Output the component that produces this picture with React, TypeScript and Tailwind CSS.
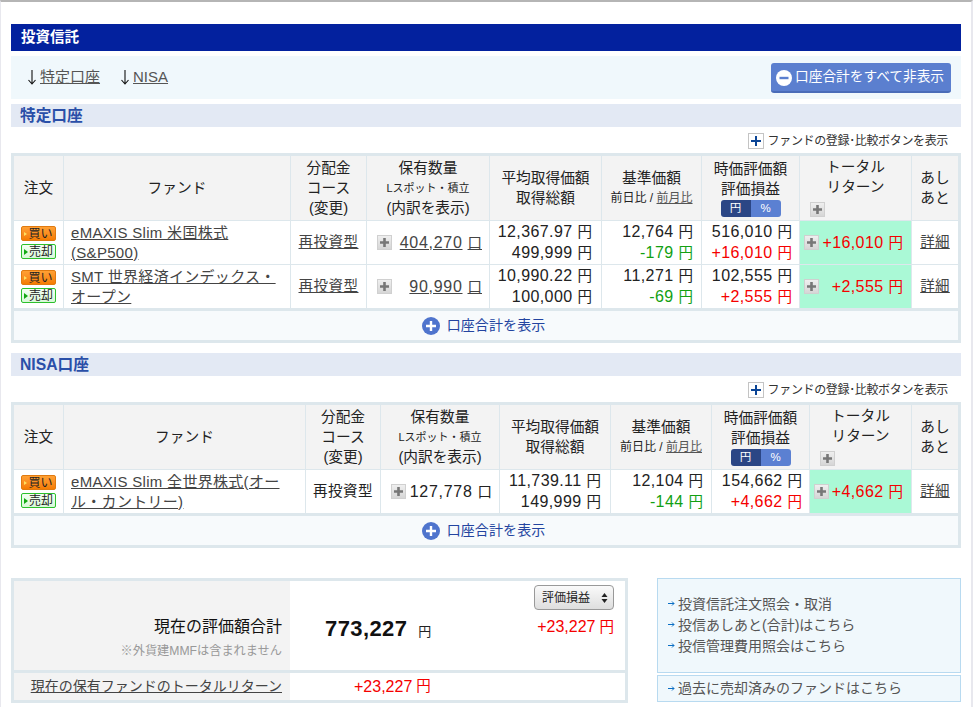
const fontStack = "font-['Liberation_Sans','Noto_Sans_CJK_JP',sans-serif]"

const firstCols = 'grid-cols-[49px_226px_75px_122px_111px_99px_97px_111px_46px]'
const nisaCols = 'grid-cols-[49px_241px_74px_118px_110px_100px_97px_101px_46px]'

type Fund = {
  name: string[]
  course: string
  courseLink: boolean
  qty: string
  qtyTight?: boolean
  avg: string
  cost: string
  base: string
  diff: string
  value: string
  gain: string
  total: string
}

const tokutei: Fund[] = [
  {
    name: ['eMAXIS Slim 米国株式', '(S&P500)'],
    course: '再投資型',
    courseLink: true,
    qty: '404,270',
    avg: '12,367.97',
    cost: '499,999',
    base: '12,764',
    diff: '-179',
    value: '516,010',
    gain: '+16,010',
    total: '+16,010',
  },
  {
    name: ['SMT 世界経済インデックス・', 'オープン'],
    course: '再投資型',
    courseLink: true,
    qty: '90,990',
    avg: '10,990.22',
    cost: '100,000',
    base: '11,271',
    diff: '-69',
    value: '102,555',
    gain: '+2,555',
    total: '+2,555',
  },
]

const nisa: Fund[] = [
  {
    name: ['eMAXIS Slim 全世界株式(オー', 'ル・カントリー)'],
    course: '再投資型',
    courseLink: false,
    qty: '127,778',
    qtyTight: true,
    avg: '11,739.11',
    cost: '149,999',
    base: '12,104',
    diff: '-144',
    value: '154,662',
    gain: '+4,662',
    total: '+4,662',
  },
]

function Yen({ v, className = '' }: { v: string; className?: string }) {
  return (
    <div className={`whitespace-nowrap text-right ${className}`}>
      <span className="text-[16px] tracking-[0.4px]">{v}</span>
      <span className="ml-[5px] text-[14.5px]">円</span>
    </div>
  )
}

function GrayPlus({ className = '' }: { className?: string }) {
  return (
    <span className={`flex h-[15px] w-[15px] shrink-0 items-center justify-center border border-[#d0d0d0] bg-gradient-to-b from-[#efefef] to-[#d6d6d6] ${className}`}>
      <svg width="9" height="9" viewBox="0 0 9 9">
        <path d="M3.2 0h2.6v3.2H9v2.6H5.8V9H3.2V5.8H0V3.2h3.2z" fill="#777" />
      </svg>
    </span>
  )
}

function CirclePlus() {
  return (
    <svg width="18" height="18" viewBox="0 0 18 18" className="shrink-0">
      <circle cx="9" cy="9" r="9" fill="#4f74cd" />
      <path d="M4 9h10M9 4v10" stroke="#fff" strokeWidth="2.4" />
    </svg>
  )
}

function OrderButtons() {
  return (
    <div className="flex flex-col items-center gap-[3px]">
      <span className="flex h-[15px] w-[35px] items-center justify-center gap-[1px] rounded-[2px] border border-[#e07a10] bg-gradient-to-b from-[#ffa033] to-[#f57c00] text-[12px] leading-none text-[#222]">
        <span className="border-y-[2px] border-l-[3px] border-y-transparent border-l-[#ffe060]" />
        買い
      </span>
      <span className="flex h-[15px] w-[35px] items-center justify-center gap-[1px] rounded-[2px] border border-[#2cc02c] bg-gradient-to-b from-[#f4fff4] to-[#d8f8d8] text-[12px] leading-none text-[#222]">
        <span className="border-y-[3px] border-l-[4px] border-y-transparent border-l-[#14a814]" />
        売却
      </span>
    </div>
  )
}

function RegisterRow() {
  return (
    <div className="flex h-[26px] items-center justify-end gap-[4px] pr-[13px] pt-[1px] text-[12px] tracking-[-0.35px] text-[#333]">
      <span className="flex h-[16px] w-[16px] items-center justify-center border border-[#c4c4c4] bg-white">
        <svg width="10" height="10" viewBox="0 0 10 10">
          <path d="M5 0v10M0 5h10" stroke="#0b4596" strokeWidth="2" />
        </svg>
      </span>
      ファンドの登録･比較ボタンを表示
    </div>
  )
}

function HeaderCells() {
  const th = 'flex flex-col items-center justify-center bg-[#f3f3f3] text-[14.7px] leading-[20px] text-[#222]'
  return (
    <>
      <div className={th}>注文</div>
      <div className={th}>ファンド</div>
      <div className={th}>
        <div>分配金</div>
        <div>コース</div>
        <div>(変更)</div>
      </div>
      <div className={th}>
        <div>保有数量</div>
        <div className="text-[11px]">Lスポット・積立</div>
        <div>(内訳を表示)</div>
      </div>
      <div className={th}>
        <div>平均取得価額</div>
        <div>取得総額</div>
      </div>
      <div className={th}>
        <div>基準価額</div>
        <div className="text-[12px]">
          前日比 / <span className="text-[#555] underline">前月比</span>
        </div>
      </div>
      <div className={th}>
        <div>時価評価額</div>
        <div>評価損益</div>
        <div className="mt-[1px] flex h-[17px] w-[60px] overflow-hidden rounded-[3px] text-[11.5px] leading-[17px] text-white">
          <span className="w-[30px] bg-[#2b4685] text-center">円</span>
          <span className="w-[30px] bg-[#5b80d2] text-center">%</span>
        </div>
      </div>
      <div className={`${th} !items-stretch !justify-start pt-[1px]`}>
        <div className="text-center">トータル</div>
        <div className="text-center">リターン</div>
        <GrayPlus className="ml-[10px] mt-[5px]" />
      </div>
      <div className={th}>
        <div>あし</div>
        <div>あと</div>
      </div>
    </>
  )
}

function FundRow({ f }: { f: Fund }) {
  const td = 'flex flex-col justify-center bg-white text-[#222]'
  return (
    <>
      <div className={`${td} items-center`}>
        <OrderButtons />
      </div>
      <div className={`${td} pl-[7px] text-[15px] leading-[19.5px] text-[#444] underline`}>
        {f.name.map((line) => (
          <div key={line} className="whitespace-nowrap tracking-[0.3px]">
            {line}
          </div>
        ))}
      </div>
      <div className={`${td} items-center text-[14.5px] tracking-[0.5px] ${f.courseLink ? 'text-[#444] underline' : ''}`}>
        {f.course}
      </div>
      <div className={`${td} !flex-row items-center pl-[10px] pr-[7px]`}>
        <GrayPlus />
        <span className={`ml-auto whitespace-nowrap ${f.qtyTight ? '' : 'text-[#444] underline'}`}>
          <span className="text-[16px] tracking-[0.7px]">{f.qty}</span>
          <span className="ml-[5px] text-[14.5px]">口</span>
        </span>
      </div>
      <div className={`${td} pr-[9px] leading-[19.5px]`}>
        <Yen v={f.avg} />
        <Yen v={f.cost} />
      </div>
      <div className={`${td} pr-[8px] leading-[19.5px]`}>
        <Yen v={f.base} />
        <Yen v={f.diff} className="text-[#12a012]" />
      </div>
      <div className={`${td} pr-[7px] leading-[19.5px]`}>
        <Yen v={f.value} />
        <Yen v={f.gain} className="text-[#f50000]" />
      </div>
      <div className={`${td} !flex-row items-center !bg-[#aaf9d6] pl-[4px] pr-[8px]`}>
        <GrayPlus />
        <Yen v={f.total} className="ml-auto text-[#f50000]" />
      </div>
      <div className={`${td} items-center text-[14.5px] tracking-[0.3px] text-[#444] underline`}>詳細</div>
    </>
  )
}

function FundTable({ cols, funds }: { cols: string; funds: Fund[] }) {
  return (
    <div className="border-[3px] border-[#dde7ec] bg-[#dde7ec]">
      <div className={`grid gap-px ${cols} grid-rows-[64px] auto-rows-[43px]`}>
        <HeaderCells />
        {funds.map((f) => (
          <FundRow key={f.qty} f={f} />
        ))}
      </div>
      <div className="mt-[3px] flex h-[29px] items-center justify-center gap-[7px] bg-[#f7fafc] pr-[5px] text-[14px] tracking-[0.1px] text-[#2344a0]">
        <CirclePlus />
        口座合計を表示
      </div>
    </div>
  )
}

function SectionTitle({ children }: { children: string }) {
  return (
    <div className="flex h-[23px] items-center bg-[#e3e9f4] pl-[9px] text-[15.7px] font-bold text-[#2a4fa8]">{children}</div>
  )
}

function LinkLine({ children }: { children: string }) {
  return (
    <div className="flex items-center gap-[3px] whitespace-nowrap text-[#555]">
      <svg width="7" height="7" viewBox="0 0 7 7" className="shrink-0">
        <path d="M0 3.5h6M4 1.5l2 2-2 2" stroke="#0b6fc4" strokeWidth="1" fill="none" />
      </svg>
      {children}
    </div>
  )
}

function DownArrow() {
  return (
    <svg width="10" height="15" viewBox="0 0 10 15" className="mr-[3px] shrink-0">
      <path d="M5 0v14M1.5 10L5 14l3.5-4" stroke="#111" strokeWidth="1.1" fill="none" />
    </svg>
  )
}

export default function App() {
  return (
    <div className={`h-[707px] w-[973px] overflow-hidden border-t-2 border-l border-r-2 border-t-[#b5b5b5] border-l-[#e8e8ee] border-r-[#e8e8ee] bg-white ${fontStack}`}>
      <div className="ml-[10px] w-[950px] pt-[22px]">
        <div className="flex h-[27px] items-center bg-[#03219e] pl-[10px] text-[14.5px] font-bold text-white">投資信託</div>

        <div className="mt-[5px] flex h-[43px] items-center justify-between bg-[#f0f8fc] pl-[16px] pr-[10px]">
          <div className="flex items-center text-[15px] text-[#555]">
            <DownArrow />
            <span className="underline">特定口座</span>
            <span className="ml-[20px]">
              <DownArrow />
            </span>
            <span className="underline">NISA</span>
          </div>
          <div className="flex h-[30px] w-[180px] items-center gap-[3px] rounded-[3px] border-b-2 border-[#4a6cb8] bg-[#5b7fcf] pl-[5px] pt-[2px] text-[13.7px] text-white">
            <svg width="16" height="16" viewBox="0 0 16 16" className="shrink-0">
              <circle cx="8" cy="8" r="8" fill="#fff" />
              <path d="M3.5 8h9" stroke="#5b7fcf" strokeWidth="2.4" />
            </svg>
            口座合計をすべて非表示
          </div>
        </div>

        <div className="mt-[5px]">
          <SectionTitle>特定口座</SectionTitle>
        </div>
        <RegisterRow />
        <FundTable cols={firstCols} funds={tokutei} />

        <div className="mt-[10px]">
          <SectionTitle>NISA口座</SectionTitle>
        </div>
        <RegisterRow />
        <FundTable cols={nisaCols} funds={nisa} />

        <div className="mt-[30px] flex items-start justify-between">
          <div className="w-[617px] border-[3px] border-[#dde7ec] bg-[#dde7ec]">
            <div className="flex h-[89px]">
              <div className="flex w-[276px] flex-col items-end bg-[#f3f3f3] pr-[8px] pt-[36px]">
                <div className="text-[16px] leading-[20px] text-[#111]">現在の評価額合計</div>
                <div className="mt-[6px] text-[12.2px] leading-[16px] text-[#999]">※外貨建MMFは含まれません</div>
              </div>
              <div className="flex flex-1 bg-white pl-[35px] pr-[11px]">
                <div className="flex items-baseline pt-[31px]">
                  <span className="text-[22px] font-bold tracking-[0.4px] text-[#111]">773,227</span>
                  <span className="ml-[11px] text-[13px] text-[#222]">円</span>
                </div>
                <div className="ml-auto flex flex-col items-end pt-[4px]">
                  <div className="flex h-[25px] w-[80px] items-center justify-between rounded-[4px] border border-[#999] bg-gradient-to-b from-[#fafafa] to-[#dedede] pl-[7px] pr-[5px] text-[12px] text-[#222]">
                    評価損益
                    <svg width="7" height="12" viewBox="0 0 7 12">
                      <path d="M3.5 1L6.5 5H.5zM3.5 11L.5 7h6z" fill="#222" />
                    </svg>
                  </div>
                  <div className="mt-[5px] whitespace-nowrap text-[#f50000]">
                    <span className="text-[16px]">+23,227</span>
                    <span className="ml-[4px] text-[14.5px]">円</span>
                  </div>
                </div>
              </div>
            </div>
            <div className="mt-[3px] flex h-[27px]">
              <div className="flex w-[276px] items-center justify-end bg-[#f3f3f3] pr-[8px] text-[14px] text-[#444] underline">
                現在の保有ファンドのトータルリターン
              </div>
              <div className="flex flex-1 items-center bg-white pl-[64px] text-[#f50000]">
                <span className="text-[16px]">+23,227</span>
                <span className="ml-[4px] text-[14.5px]">円</span>
              </div>
            </div>
          </div>

          <div className="w-[304px]">
            <div className="flex h-[95px] flex-col justify-center gap-[1px] border border-[#b8daf0] bg-[#f0f8fc] pb-[2px] pl-[10px] text-[14px] leading-[20px]">
              <LinkLine>投資信託注文照会・取消</LinkLine>
              <LinkLine>投信あしあと(合計)はこちら</LinkLine>
              <LinkLine>投信管理費用照会はこちら</LinkLine>
            </div>
            <div className="mt-[2px] flex h-[27px] items-center border border-[#b8daf0] bg-[#f0f8fc] pb-[1px] pl-[10px] text-[14px]">
              <LinkLine>過去に売却済みのファンドはこちら</LinkLine>
            </div>
          </div>
        </div>
      </div>
    </div>
  )
}
